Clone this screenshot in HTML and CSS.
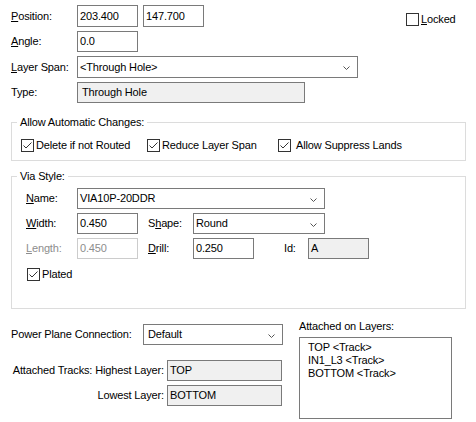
FILE: index.html
```html
<!DOCTYPE html>
<html>
<head>
<meta charset="utf-8">
<link rel="stylesheet" href="styles.css">
</head>
<body>
<div class="dialog">
  <div class="top">
    <div class="fields">
      <div class="row r22">
        <span class="lbl"><u>P</u>osition:</span>
        <span class="box w61">203.400</span>
        <span class="box w61 ml6">147.700</span>
      </div>
      <div class="row">
        <span class="lbl"><u>A</u>ngle:</span>
        <span class="box w61">0.0</span>
      </div>
      <div class="row r22">
        <span class="lbl"><u>L</u>ayer Span:</span>
        <span class="box combo w281">&lt;Through Hole&gt;<svg class="chev" width="7" height="4" viewBox="0 0 7 4"><path d="M0.5 0.5 L3.5 3.5 L6.5 0.5" fill="none" stroke="#555" stroke-width="1"/></svg></span>
      </div>
      <div class="row">
        <span class="lbl">Type:</span>
        <span class="box ro w228 pl4">Through Hole</span>
      </div>
    </div>
    <label class="chk locked"><span class="cb"></span><span class="ct"><u>L</u>ocked</span></label>
  </div>

  <fieldset class="group g1">
    <legend>Allow Automatic Changes:</legend>
    <div class="chkrow">
      <label class="chk c1"><span class="cb"><svg width="11" height="11" viewBox="0 0 11 11"><path d="M1.5 5.5 L4 8 L9.5 2.5" fill="none" stroke="#333" stroke-width="1"/></svg></span><span class="ct">Delete if not Routed</span></label>
      <label class="chk c2"><span class="cb"><svg width="11" height="11" viewBox="0 0 11 11"><path d="M1.5 5.5 L4 8 L9.5 2.5" fill="none" stroke="#333" stroke-width="1"/></svg></span><span class="ct">Reduce Layer Span</span></label>
      <label class="chk c3"><span class="cb"><svg width="11" height="11" viewBox="0 0 11 11"><path d="M1.5 5.5 L4 8 L9.5 2.5" fill="none" stroke="#333" stroke-width="1"/></svg></span><span class="ct wide">Allow Suppress Lands</span></label>
    </div>
  </fieldset>

  <fieldset class="group g2">
    <legend>Via Style:</legend>
    <div class="vrows">
      <div class="row">
        <span class="vlbl"><u>N</u>ame:</span>
        <span class="box combo w248">VIA10P-20DDR<svg class="chev" width="7" height="4" viewBox="0 0 7 4"><path d="M0.5 0.5 L3.5 3.5 L6.5 0.5" fill="none" stroke="#555" stroke-width="1"/></svg></span>
      </div>
      <div class="row">
        <span class="vlbl"><u>W</u>idth:</span>
        <span class="box w61">0.450</span>
        <span class="mlbl">S<u>h</u>ape:</span>
        <span class="box combo w132">Round<svg class="chev" width="7" height="4" viewBox="0 0 7 4"><path d="M0.5 0.5 L3.5 3.5 L6.5 0.5" fill="none" stroke="#555" stroke-width="1"/></svg></span>
      </div>
      <div class="row">
        <span class="vlbl dis"><u>L</u>ength:</span>
        <span class="box w61 disbox">0.450</span>
        <span class="mlbl"><u>D</u>rill:</span>
        <span class="box w61">0.250</span>
        <span class="idlbl">Id:</span>
        <span class="box ro w61">A</span>
      </div>
    </div>
    <label class="chk plated"><span class="cb"><svg width="11" height="11" viewBox="0 0 11 11"><path d="M1.5 5.5 L4 8 L9.5 2.5" fill="none" stroke="#333" stroke-width="1"/></svg></span><span class="ct">Plated</span></label>
  </fieldset>

  <div class="bottom">
    <div class="bleft">
      <div class="row">
        <span class="plbl">Power Plane Connection:</span>
        <span class="box combo w140 pl4">Default<svg class="chev" width="7" height="4" viewBox="0 0 7 4"><path d="M0.5 0.5 L3.5 3.5 L6.5 0.5" fill="none" stroke="#555" stroke-width="1"/></svg></span>
      </div>
      <div class="row hi">
        <span class="tlbl">Attached Tracks: Highest Layer:</span>
        <span class="box ro w115">TOP</span>
      </div>
      <div class="row lo">
        <span class="tlbl">Lowest Layer:</span>
        <span class="box ro w115">BOTTOM</span>
      </div>
    </div>
    <div class="bright">
      <div class="llbl">Attached on Layers:</div>
      <div class="list">
        <div>TOP &lt;Track&gt;</div>
        <div>IN1_L3 &lt;Track&gt;</div>
        <div>BOTTOM &lt;Track&gt;</div>
      </div>
    </div>
  </div>
</div>
</body>
</html>
```

FILE: styles.css
```css
html, body {
  margin: 0;
  padding: 0;
  background: #ffffff;
}
body {
  font-family: "Liberation Sans", Arial, sans-serif;
  font-size: 11px;
  line-height: 13px;
  letter-spacing: -0.15px;
  color: #000000;
}
u {
  text-decoration: underline;
  text-underline-offset: 1px;
}
.dialog {
  width: 476px;
  height: 422px;
  box-sizing: border-box;
  padding: 5px 10px 0 11px;
  overflow: hidden;
}
.top {
  display: flex;
  align-items: flex-start;
}
.fields {
  width: 395px;
  display: flex;
  flex-direction: column;
  gap: 4px;
}
.row {
  display: flex;
  align-items: center;
  height: 21px;
}
.row.r22 {
  height: 22px;
}
.lbl {
  width: 66px;
  flex: none;
}
.box {
  box-sizing: border-box;
  height: 21px;
  border: 1px solid #7a7a7a;
  padding: 0 2px;
  display: flex;
  align-items: center;
  flex: none;
  background: #ffffff;
  white-space: nowrap;
}
.r22 .box {
  height: 22px;
}
.combo {
  position: relative;
}
.chev {
  position: absolute;
  right: 7px;
  top: 9px;
}
.ro {
  background: #f0f0f0;
}
.pl4 {
  padding-left: 4px;
}
.disbox {
  border-color: #cccccc;
  color: #8d8d8d;
}
.dis {
  color: #8d8d8d;
}
.w61 { width: 61px; }
.w115 { width: 115px; }
.w132 { width: 132px; }
.w140 { width: 140px; }
.w228 { width: 228px; }
.w248 { width: 248px; }
.w281 { width: 281px; }
.ml6 { margin-left: 5px; }

.chk {
  display: flex;
  align-items: center;
  height: 13px;
}
.cb {
  box-sizing: border-box;
  width: 13px;
  height: 13px;
  border: 1px solid #333333;
  background: #ffffff;
  flex: none;
  display: block;
}
.cb svg {
  display: block;
}
.ct {
  margin-left: 2px;
}
.ct.wide {
  margin-left: 5px;
}
.locked {
  margin-top: 8px;
}

.group {
  margin: 0;
  border: 1px solid #dcdcdc;
  min-width: 0;
}
.group legend {
  padding: 0 3px;
  line-height: 13px;
}
.g1 {
  margin-top: 13px;
  padding: 10px 10px 8px 9px;
}
.g1 legend {
  margin-left: -4px;
}
.chkrow {
  display: flex;
}
.c1 { width: 126px; flex: none; }
.c2 { width: 131px; flex: none; }

.g2 {
  margin-top: 9px;
  padding: 5px 10px 27px 14px;
}
.g2 legend {
  margin-left: -9px;
}
.vrows {
  display: flex;
  flex-direction: column;
  gap: 4px;
}
.vlbl {
  width: 51px;
  flex: none;
}
.mlbl {
  width: 45px;
  margin-left: 10px;
  flex: none;
}
.idlbl {
  width: 24px;
  margin-left: 30px;
  flex: none;
}
.plated {
  margin-top: 9px;
  margin-left: 1px;
}

.bottom {
  display: flex;
  margin-top: 11px;
}
.bleft {
  width: 288px;
  flex: none;
  padding-top: 4px;
}
.plbl {
  width: 132px;
  flex: none;
}
.row.hi {
  margin-top: 15px;
}
.row.lo {
  margin-top: 4px;
}
.tlbl {
  width: 156px;
  flex: none;
  text-align: right;
  padding-right: 3px;
  box-sizing: border-box;
  white-space: nowrap;
}
.bright {
  width: 153px;
}
.llbl {
  height: 13px;
}
.list {
  margin-top: 4px;
  box-sizing: border-box;
  height: 82px;
  border: 1px solid #7a7a7a;
  padding: 3px 8px;
}
.list div {
  height: 13px;
}
```
